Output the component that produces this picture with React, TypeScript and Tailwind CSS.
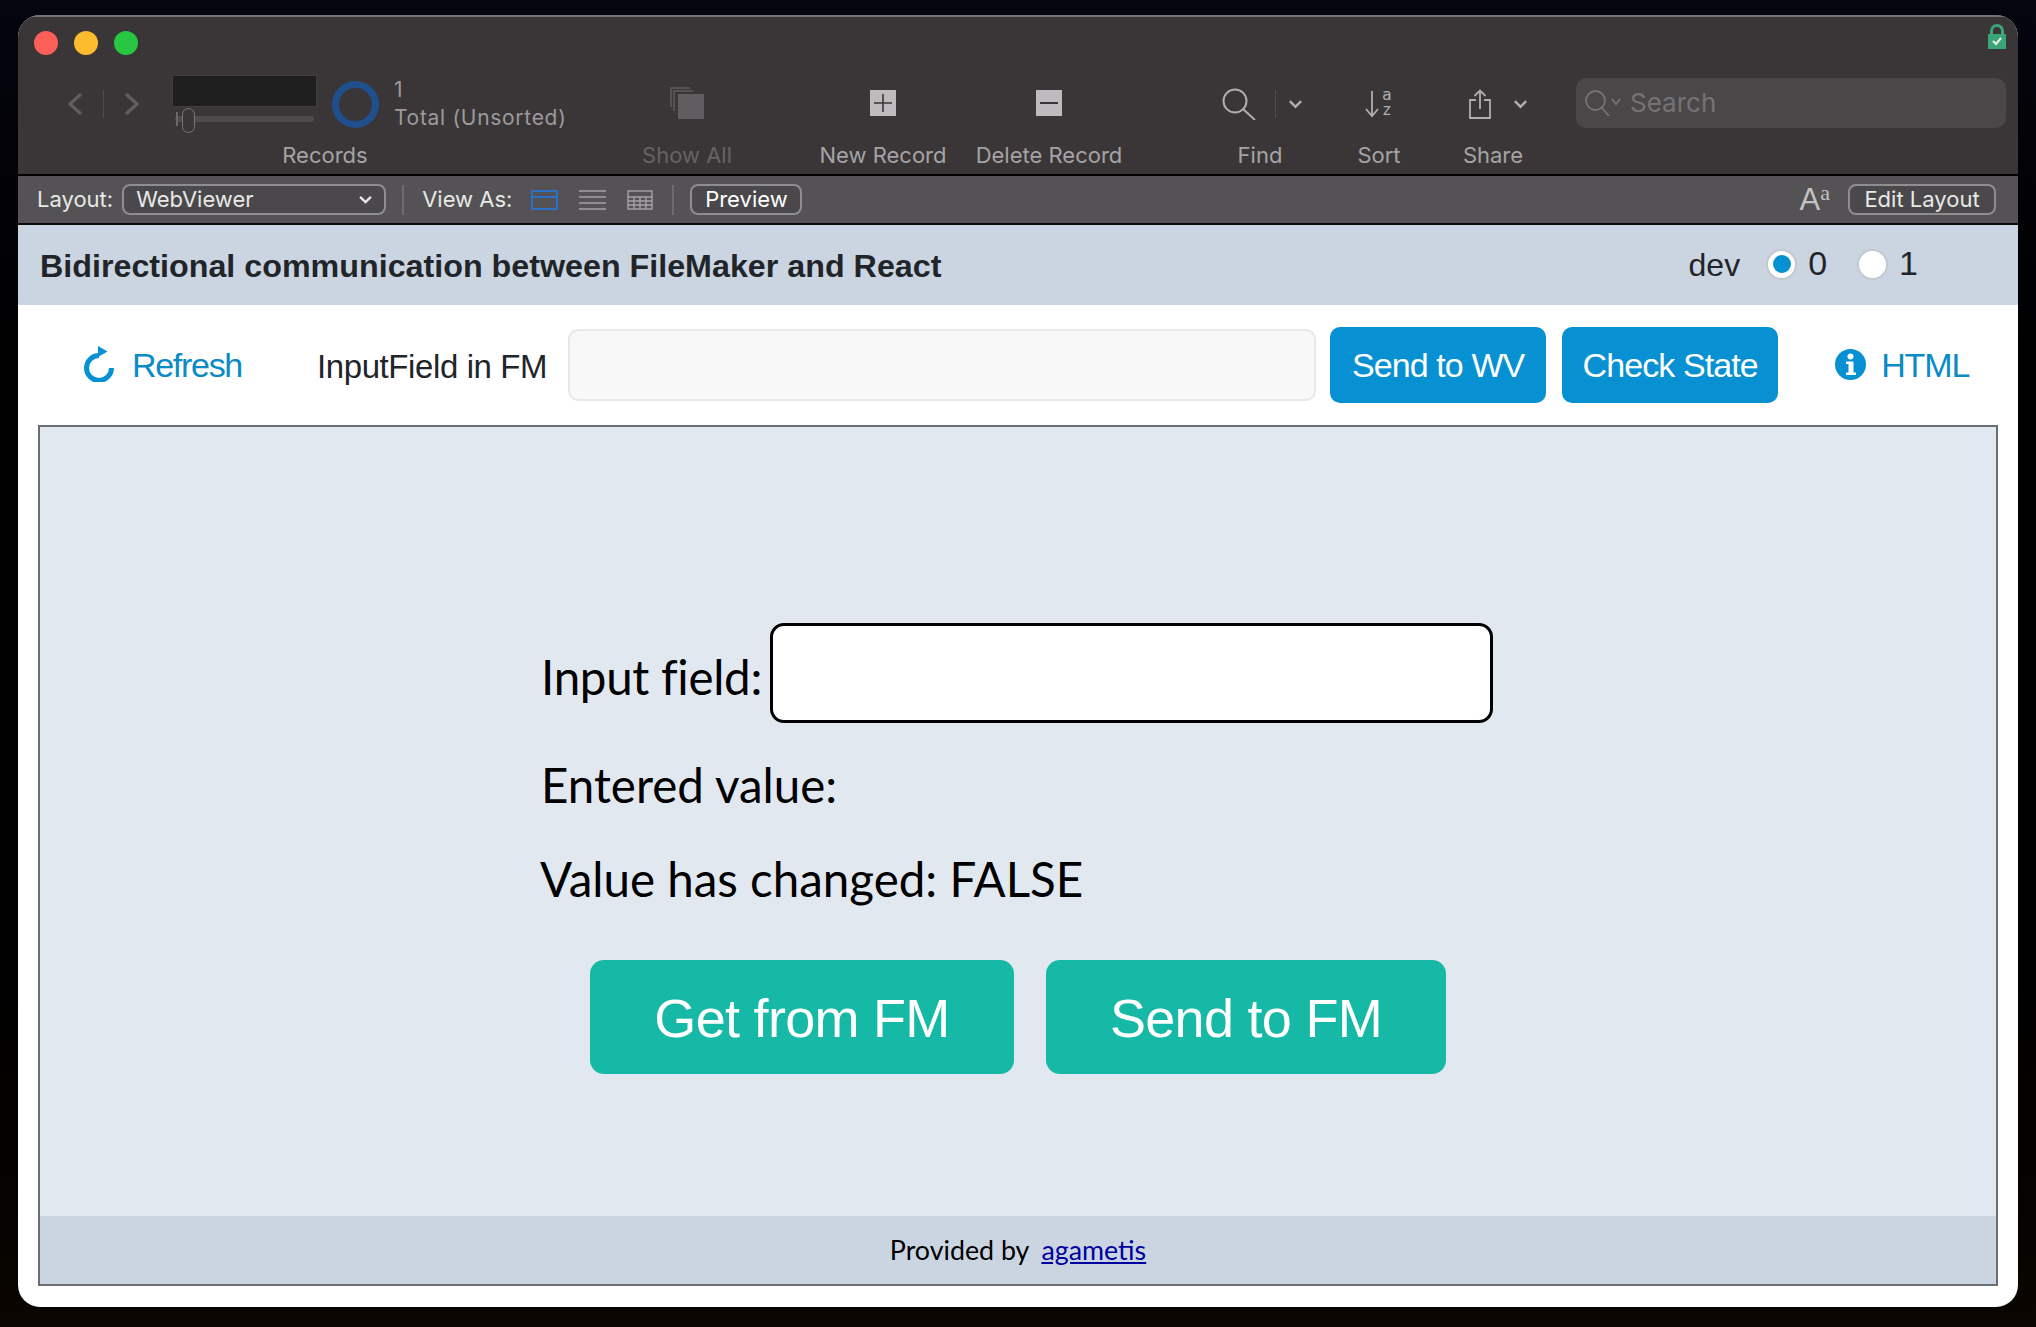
import React from "react";

const Chevron = ({ className = "" }: { className?: string }) => (
  <svg viewBox="0 0 16 10" className={className} fill="none" stroke="currentColor" strokeWidth="2.6">
    <path d="M2 2l6 6 6-6" />
  </svg>
);

const ToolItem = ({ label, w, ml, dim, children }: { label: string; w: string; ml: string; dim?: boolean; children: React.ReactNode }) => (
  <div className={`flex flex-col items-center ${w} ${ml}`}>
    <div className="flex h-[56px] items-center justify-center">{children}</div>
    <div className={`mt-[10px] whitespace-nowrap text-[22px] leading-[26px] ${dim ? "text-[#656365]" : "text-[#a5a3a5]"}`}>{label}</div>
  </div>
);

export default function App() {
  return (
    <div className="h-[1327px] w-[2036px] overflow-hidden bg-gradient-to-b from-[#050510] via-black to-[#0a0500] pl-[18px] pt-[15px]" style={{ fontFamily: '"Liberation Sans", sans-serif' }}>
      <div className="flex h-[1292px] w-[2000px] flex-col overflow-hidden rounded-[22px] bg-white">
        {/* Toolbar */}
        <div className="relative h-[161px] shrink-0 border-t-2 border-b-2 border-t-[#757375] border-b-black bg-[#3a3637]" style={{ fontFamily: 'Inter, sans-serif' }}>
          <div className="flex gap-[16px] pl-[16px] pt-[14px]">
            <div className="h-[24px] w-[24px] rounded-full bg-[#fb5f58]" />
            <div className="h-[24px] w-[24px] rounded-full bg-[#fdbb2e]" />
            <div className="h-[24px] w-[24px] rounded-full bg-[#29c741]" />
          </div>
          <svg viewBox="0 0 18 25" className="absolute right-[12px] top-[7px] h-[25px] w-[18px]">
            <path d="M3.5 11V7a5.5 5.5 0 0 1 11 0v4" fill="none" stroke="#3aa578" strokeWidth="3" />
            <rect x="0" y="10" width="18" height="15" fill="#3aa578" />
            <path d="M5 17l3 3 5-6" fill="none" stroke="#e8f5ef" strokeWidth="2" />
          </svg>
          <div className="mt-[21px] flex">
            {/* Records */}
            <div className="ml-[32px] flex w-[550px] flex-col items-center">
              <div className="flex h-[56px] w-full items-center">
                <svg viewBox="0 0 16 24" className="ml-[17px] h-[24px] w-[16px] text-[#5f5d5f]" fill="none" stroke="currentColor" strokeWidth="3.4">
                  <path d="M14 2L3 12l11 10" />
                </svg>
                <div className="mx-[20px] h-[28px] w-px bg-[#4e4c4e]" />
                <svg viewBox="0 0 16 24" className="h-[24px] w-[16px] text-[#5f5d5f]" fill="none" stroke="currentColor" strokeWidth="3.4">
                  <path d="M2 2l11 10L2 22" />
                </svg>
                <div className="relative ml-[32px] h-[58px] w-[145px]">
                  <div className="h-[32px] w-full border border-[#3f3d3f] bg-[#1f1f1f]" />
                  <div className="absolute left-[3px] right-[3px] top-[41px] h-[6px] rounded-full bg-[#4d4b4d]" />
                  <div className="absolute left-[10px] top-[33px] h-[25px] w-[13px] rounded-full border border-[#777577] bg-[#3a3637]" />
                  <div className="absolute left-[4px] top-[37px] h-[14px] w-[2px] bg-[#6a686a]" />
                </div>
                <div className="ml-[15px] h-[47px] w-[47px] rounded-full border-[7px] border-[#1f4f8c]" />
                <div className="ml-[15px] whitespace-nowrap text-[21px] leading-[28px] tracking-[0.7px] text-[#9c9a9c]">
                  <div>1</div>
                  <div>Total (Unsorted)</div>
                </div>
              </div>
              <div className="mt-[10px] text-[22px] leading-[26px] text-[#a5a3a5]">Records</div>
            </div>
            <ToolItem label="Show All" w="w-[174px]" ml="" dim>
              <svg viewBox="0 0 34 32" className="mt-[-2px] h-[32px] w-[34px]">
                <path d="M1 20V1h19M4 24V4h19" fill="none" stroke="#5f5d5f" strokeWidth="1.5" />
                <rect x="8" y="7" width="26" height="25" fill="#5f5d5f" />
              </svg>
            </ToolItem>
            <ToolItem label="New Record" w="w-[166px]" ml="ml-[26px]">
              <svg viewBox="0 0 26 26" className="mt-[-2px] h-[26px] w-[26px]">
                <rect width="26" height="26" fill="#bdbbbd" />
                <path d="M13 4v18M4 13h18" stroke="#3a3637" strokeWidth="1.6" />
              </svg>
            </ToolItem>
            <ToolItem label="Delete Record" w="w-[166px]" ml="">
              <svg viewBox="0 0 26 26" className="mt-[-2px] h-[26px] w-[26px]">
                <rect width="26" height="26" fill="#bdbbbd" />
                <path d="M4 13h18" stroke="#3a3637" strokeWidth="1.8" />
              </svg>
            </ToolItem>
            <ToolItem label="Find" w="w-[90px]" ml="ml-[83px]">
              <div className="ml-[5px] flex items-center text-[#b0aeb0]">
                <svg viewBox="0 0 34 32" className="h-[32px] w-[34px]" fill="none" stroke="currentColor" strokeWidth="2">
                  <circle cx="13" cy="13" r="11.5" />
                  <path d="M21 21l12 11" />
                </svg>
                <div className="ml-[19px] h-[28px] w-px bg-[#4e4c4e]" />
                <Chevron className="ml-[12px] h-[10px] w-[15px]" />
              </div>
            </ToolItem>
            <ToolItem label="Sort" w="w-[60px]" ml="ml-[44px]">
              <div className="relative h-[30px] w-[30px] text-[#b0aeb0]">
                <svg viewBox="0 0 16 30" className="absolute left-0 top-0 h-[30px] w-[16px]" fill="none" stroke="currentColor" strokeWidth="1.8">
                  <path d="M8 2v25M2 20l6 7 6-7" />
                </svg>
                <span className="absolute left-[18px] top-[-1px] text-[16px] leading-[14px]" style={{ fontFamily: '"DejaVu Sans Mono", monospace' }}>a</span>
                <span className="absolute left-[18px] top-[14px] text-[16px] leading-[14px]" style={{ fontFamily: '"DejaVu Sans Mono", monospace' }}>z</span>
              </div>
            </ToolItem>
            <ToolItem label="Share" w="w-[80px]" ml="ml-[44px]">
              <div className="ml-[10px] flex items-center text-[#b0aeb0]">
                <svg viewBox="0 0 22 30" className="mt-[-1px] h-[30px] w-[22px]" fill="none" stroke="currentColor" strokeWidth="1.8">
                  <path d="M11 20V2M5.5 7L11 1.5 16.5 7M7 11H1v18h20V11h-6" />
                </svg>
                <Chevron className="ml-[22px] h-[10px] w-[15px]" />
              </div>
            </ToolItem>
            <div className="ml-[43px] mt-[2px] flex h-[50px] w-[430px] items-center rounded-[10px] bg-[#4a4748] pl-[9px] text-[#757375]">
              <svg viewBox="0 0 36 26" className="h-[26px] w-[36px]" fill="none" stroke="currentColor" strokeWidth="1.8">
                <circle cx="10.500" cy="10.500" r="9.500" />
                <path d="M17 18l7 8M27 9l4 5 4-5" />
              </svg>
              <span className="ml-[9px] text-[26px] leading-none">Search</span>
            </div>
          </div>
        </div>
        {/* Layout bar */}
        <div className="flex h-[49px] shrink-0 items-center border-b-2 border-b-[#0a0a0a] bg-[#545254] text-[22px] text-[#e8e8e8]" style={{ fontFamily: 'Inter, sans-serif' }}>
          <span className="ml-[19px]">Layout:</span>
          <div className="ml-[9px] flex h-[31px] w-[264px] items-center justify-between rounded-[8px] border-2 border-[#8e8d8f] bg-[#4a484a] pl-[12px] pr-[11px]">
            <span>WebViewer</span>
            <Chevron className="h-[9px] w-[15px]" />
          </div>
          <div className="ml-[16px] h-[30px] w-[2px] bg-[#6e6c6e]" />
          <span className="ml-[18px]">View As:</span>
          <svg viewBox="0 0 27 20" className="ml-[19px] h-[20px] w-[27px]" fill="none" stroke="#2f6fc4" strokeWidth="2.2">
            <rect x="1" y="1" width="25" height="18" />
            <path d="M1 7h25" />
          </svg>
          <svg viewBox="0 0 27 20" className="ml-[21px] h-[20px] w-[27px]" fill="none" stroke="#a5a3a5" strokeWidth="1.5">
            <path d="M0 1h27M0 7h27M0 13h27M0 19h27" />
          </svg>
          <svg viewBox="0 0 26 20" className="ml-[21px] h-[20px] w-[26px]" fill="none" stroke="#a5a3a5" strokeWidth="1.4">
            <rect x="1" y="1" width="24" height="18" />
            <path d="M1 7h24M1 11h24M1 15h24M7 7v12M13 7v12M19 7v12" />
          </svg>
          <div className="ml-[19px] h-[30px] w-[2px] bg-[#6e6c6e]" />
          <div className="ml-[16px] flex h-[31px] w-[112px] items-center justify-center rounded-[8px] border-2 border-[#8e8d8f] bg-[#4a484a] text-white">Preview</div>
          <div className="ml-auto flex items-start text-[#c4c2c4]" style={{ fontFamily: '"Liberation Sans", sans-serif' }}>
            <span className="text-[31px] leading-[32px]">A</span>
            <span className="text-[22px] leading-[18px]" style={{ fontFamily: '"Liberation Serif", serif' }}>a</span>
          </div>
          <div className="ml-[18px] mr-[22px] flex h-[31px] w-[148px] items-center justify-center rounded-[8px] border-2 border-[#8e8d8f] bg-[#4a484a]">Edit Layout</div>
        </div>
        {/* Header */}
        <div className="flex h-[80px] shrink-0 items-center bg-[#cbd5e1] pl-[22px] text-[#212529]">
          <h1 className="mt-[3px] text-[32.250px] font-bold">Bidirectional communication between FileMaker and React</h1>
          <span className="mb-[1px] ml-auto text-[32px]">dev</span>
          <div className="mb-[2px] ml-[26px] flex h-[31px] w-[31px] items-center justify-center rounded-full border-2 border-[#c4c9d0] bg-white">
            <div className="h-[18px] w-[18px] rounded-full bg-[#0891d2]" />
          </div>
          <span className="mb-[4px] ml-[11px] text-[34px]">0</span>
          <div className="mb-[2px] ml-[30px] h-[31px] w-[31px] rounded-full border-2 border-[#c4c9d0] bg-white" />
          <span className="mb-[4px] ml-[11px] mr-[100px] text-[34px]">1</span>
        </div>
        {/* Control row */}
        <div className="flex h-[120px] shrink-0 items-center text-[34px] leading-none text-[#0a8bc7]">
          <svg viewBox="0 0 30 36" className="ml-[66px] mt-[-2px] h-[36px] w-[30px] text-[#0891d2]">
            <path d="M27.500 22A12.500 12.500 0 1 1 15 9.500" fill="none" stroke="currentColor" strokeWidth="5" />
            <path d="M14 0l9.500 5.500L14 11z" fill="currentColor" />
          </svg>
          <span className="ml-[18px] tracking-[-1.3px]">Refresh</span>
          <span className="ml-[75px] mt-[2px] text-[33px] tracking-[-0.4px] text-[#212529]">InputField in FM</span>
          <div className="ml-[21px] h-[72px] w-[748px] rounded-[10px] border-2 border-[#e8e8e8] bg-[#f8f8f8]" />
          <div className="ml-[14px] flex h-[76px] w-[216px] items-center justify-center rounded-[10px] bg-[#0891d2] tracking-[-0.9px] text-white">Send to WV</div>
          <div className="ml-[16px] flex h-[76px] w-[216px] items-center justify-center rounded-[10px] bg-[#0891d2] tracking-[-0.9px] text-white">Check State</div>
          <svg viewBox="0 0 31 31" className="ml-[57px] mt-[-1px] h-[31px] w-[31px]">
            <circle cx="15.500" cy="15.500" r="15.500" fill="#0891d2" />
            <circle cx="15.500" cy="7.500" r="3" fill="#fff" />
            <path d="M11 12.500h7.500v11H21v2.500H11v-2.500h2.500v-8.500H11z" fill="#fff" />
          </svg>
          <span className="ml-[15px] tracking-[-1.1px]">HTML</span>
        </div>
        {/* Main box */}
        <div className="mx-[20px] flex h-[861px] shrink-0 flex-col border-2 border-[#6b6e73] bg-[#e2e8f0] text-black" style={{ fontFamily: 'Lato, sans-serif' }}>
          <div className="ml-[501px] mt-[196px] flex w-[952px] items-center justify-between text-[47.500px]">
            <span className="mt-[8px] tracking-[-0.3px]">Input field:</span>
            <div className="h-[100px] w-[723px] rounded-[14px] border-[3px] border-black bg-white" />
          </div>
          <div className="ml-[501px] mt-[34px] text-[47.500px] leading-[56px]">Entered value:</div>
          <div className="ml-[500px] mt-[38px] text-[47.500px] leading-[56px]">Value has changed: FALSE</div>
          <div className="ml-[550px] mt-[53px] flex gap-[32px] text-[54px] tracking-[-0.7px] text-white" style={{ fontFamily: '"Liberation Sans", sans-serif' }}>
            <div className="flex h-[114px] w-[424px] items-center justify-center rounded-[14px] bg-[#16b8a6]"><span className="mt-[2px]">Get from FM</span></div>
            <div className="flex h-[114px] w-[400px] items-center justify-center rounded-[14px] bg-[#16b8a6]"><span className="mt-[2px]">Send to FM</span></div>
          </div>
          <div className="mt-auto flex h-[68px] items-center justify-center gap-[12px] bg-[#cbd5e1] text-[26.800px]">
            <span>Provided by</span>
            <a href="#" className="text-[#0000a0] underline">agametis</a>
          </div>
        </div>
      </div>
    </div>
  );
}
